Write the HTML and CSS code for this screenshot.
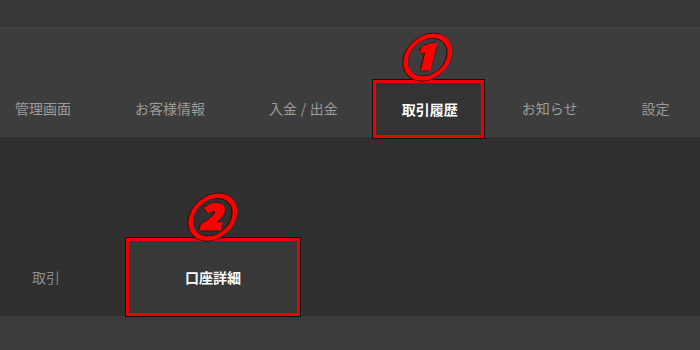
FILE: index.html
```html
<!DOCTYPE html>
<html lang="ja">
<head>
  <meta charset="UTF-8" />
  <title>取引履歴 - 口座詳細</title>
  <link rel="stylesheet" href="styles.css">
</head>
<body>
  <!-- ヘッダー -->
  <div class="top-strip"></div>
  <nav class="main-nav">
    <a class="nav-item">管理画面</a>
    <a class="nav-item">お客様情報</a>
    <a class="nav-item wide">入金 / 出金</a>
    <a class="nav-item active">
      <span class="mark">①</span>
      取引履歴
    </a>
    <a class="nav-item">お知らせ</a>
    <a class="nav-item">設定</a>
  </nav>

  <!-- サブメニュー -->
  <div class="sub-area">
    <div class="sub-nav">
      <a class="sub-item">取引</a>
      <a class="sub-item active">
        <span class="mark">②</span>
        口座詳細
      </a>
    </div>
  </div>
  <div class="bottom-band"></div>
</body>
</html>
```

FILE: styles.css
```css
body {
  margin: 0;
  background: #303030;
  font-family: "Noto Sans CJK JP", "Noto Sans", sans-serif;
  font-size: 14px;
  overflow: hidden;
}
a {
  text-decoration: none;
}
.top-strip {
  height: 27px;
  background: #373737;
  border-bottom: 1px solid #444;
}
.main-nav {
  height: 109px;
  background: #3d3d3d;
  display: flex;
  align-items: flex-end;
  gap: 64px;
  padding-left: 15px;
}
.nav-item {
  height: 58px;
  box-sizing: border-box;
  margin-bottom: -1px;
  padding-bottom: 3px;
  display: flex;
  align-items: center;
  color: #9b9b9b;
  white-space: nowrap;
  position: relative;
}
.nav-item.wide {
  word-spacing: 0.5px;
}
.nav-item.active {
  margin: 0 -26px -1px -29px;
  padding: 0 23px 0 26px;
  background: #333;
  color: #fff;
  font-weight: bold;
  border: 3px solid #e8000b;
  box-shadow: 0 0 0 1px #111;
}
.mark {
  position: absolute;
  left: 50%;
  top: -52px;
  transform: translateX(-50%) skewX(-14deg);
  font-size: 47px;
  line-height: 1;
  font-weight: 900;
  font-style: normal;
  color: #f00;
  -webkit-text-stroke: 2.5px #f00;
  text-shadow: 1px 1px 0 #111, -1px -1px 0 #111, 1px -1px 0 #111, -1px 1px 0 #111, 2px 0 0 #111, -2px 0 0 #111, 0 2px 0 #111, 0 -2px 0 #111;
}
.sub-area {
  height: 179px;
  background: #303030;
  display: flex;
  align-items: flex-end;
}
.sub-nav {
  display: flex;
  align-items: stretch;
  height: 78px;
}
.sub-item {
  width: 126px;
  padding-left: 32px;
  box-sizing: border-box;
  display: flex;
  align-items: center;
  color: #8c8c8c;
  position: relative;
}
.sub-item.active {
  width: 174px;
  padding: 0;
  justify-content: center;
  background: #383838;
  color: #fff;
  font-weight: bold;
  border: 3px solid #e8000b;
  box-shadow: 0 0 0 1px #111;
}
.sub-item.active .mark {
  top: -50px;
}
.bottom-band {
  height: 34px;
  background: #3b3b3b;
}
```
